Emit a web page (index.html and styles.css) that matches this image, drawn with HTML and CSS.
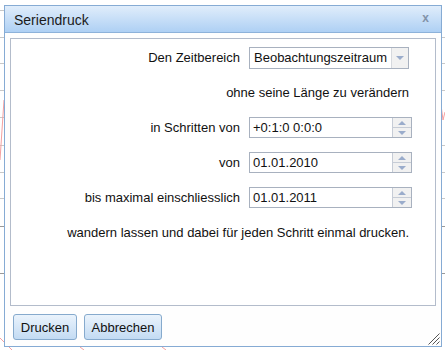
FILE: index.html
```html
<!DOCTYPE html>
<html lang="de">
<head>
<meta charset="utf-8">
<title>Seriendruck</title>
<link rel="stylesheet" href="styles.css">
</head>
<body>
<svg class="backdrop" width="445" height="350" viewBox="0 0 445 350">
  <g stroke="#c8c8c8" stroke-width="1">
    <line x1="0" y1="10.5" x2="4" y2="10.5"/>
    <line x1="0" y1="37.5" x2="4" y2="37.5"/>
    <line x1="0" y1="63.5" x2="4" y2="63.5"/>
    <line x1="0" y1="90.5" x2="4" y2="90.5"/>
    <line x1="0" y1="117.5" x2="4" y2="117.5"/>
    <line x1="0" y1="145.5" x2="4" y2="145.5"/>
    <line x1="0" y1="172.5" x2="4" y2="172.5"/>
    <line x1="0" y1="198.5" x2="4" y2="198.5"/>
    <line x1="441" y1="37.5" x2="445" y2="37.5"/>
    <line x1="441" y1="63.5" x2="445" y2="63.5"/>
    <line x1="441" y1="90.5" x2="445" y2="90.5"/>
    <line x1="441" y1="145.5" x2="445" y2="145.5"/>
    <line x1="441" y1="172.5" x2="445" y2="172.5"/>
    <line x1="441" y1="198.5" x2="445" y2="198.5"/>
  </g>
  <g stroke="#999" stroke-width="1">
    <line x1="0" y1="226.5" x2="4" y2="226.5"/>
    <line x1="0" y1="273.5" x2="4" y2="273.5"/>
    <line x1="441" y1="226.5" x2="445" y2="226.5"/>
    <line x1="441" y1="273.5" x2="445" y2="273.5"/>
  </g>
  <g stroke="#f4a0a0" stroke-width="1" fill="none">
    <polyline points="0,160 2,130 4,100"/>
    <polyline points="441,105 443,120 445,112"/>
    <polyline points="0,338 6,344 12,350"/>
    <polyline points="80,347 84,350"/>
    <polyline points="162,347 166,350"/>
  </g>
</svg>

<div class="dialog">
  <div class="titlebar">
    <span class="title">Seriendruck</span>
    <span class="close">x</span>
  </div>
  <div class="panel">
    <div class="form">
      <span class="label">Den Zeitbereich</span>
      <div class="select">
        <span class="select-text">Beobachtungszeitraum</span>
        <span class="select-btn"><span class="tri-down"></span></span>
      </div>

      <span class="note">ohne seine Länge zu verändern</span>

      <span class="label">in Schritten von</span>
      <div class="spin">
        <span class="spin-text">+0:1:0 0:0:0</span>
        <span class="spin-btns"><span class="half"><span class="tri-up"></span></span><span class="half"><span class="tri-down"></span></span></span>
      </div>

      <span class="label">von</span>
      <div class="spin">
        <span class="spin-text">01.01.2010</span>
        <span class="spin-btns"><span class="half"><span class="tri-up"></span></span><span class="half"><span class="tri-down"></span></span></span>
      </div>

      <span class="label">bis maximal einschliesslich</span>
      <div class="spin">
        <span class="spin-text">01.01.2011</span>
        <span class="spin-btns"><span class="half"><span class="tri-up"></span></span><span class="half"><span class="tri-down"></span></span></span>
      </div>

      <span class="note">wandern lassen und dabei für jeden Schritt einmal drucken.</span>
    </div>
  </div>
  <div class="buttons">
    <button class="btn btn-print">Drucken</button>
    <button class="btn btn-cancel">Abbrechen</button>
  </div>
  <svg class="grip" width="12" height="12" viewBox="0 0 12 12">
    <g stroke="#555" stroke-width="1">
      <line x1="11.5" y1="0.5" x2="0.5" y2="11.5"/>
      <line x1="11.5" y1="4.5" x2="4.5" y2="11.5"/>
      <line x1="11.5" y1="8.5" x2="8.5" y2="11.5"/>
    </g>
  </svg>
</div>
</body>
</html>
```

FILE: styles.css
```css
* { box-sizing: border-box; }

html, body {
  margin: 0;
  padding: 0;
  width: 445px;
  height: 350px;
  overflow: hidden;
  background: #ffffff;
  font-family: "Liberation Sans", Arial, sans-serif;
  color: #111;
}

.backdrop {
  position: absolute;
  left: 0;
  top: 0;
}

.dialog {
  position: absolute;
  left: 4px;
  top: 5px;
  width: 438px;
  height: 342px;
  border: 1px solid #86abd4;
  background: #fefefe;
  display: flex;
  flex-direction: column;
}

.titlebar {
  height: 27px;
  flex: none;
  border-bottom: 1px solid #8db2da;
  background: linear-gradient(#e0edfb, #aed0f4);
  display: flex;
  align-items: center;
  justify-content: space-between;
  padding: 0 12px 0 9px;
}

.title {
  font-size: 14px;
  color: #1b1b1b;
  margin-top: 1px;
}

.close {
  font-size: 12px;
  font-weight: bold;
  color: #8292a8;
  line-height: 1;
  margin-top: -2px;
}

.panel {
  margin: 5px 5px 0 5px;
  height: 268px;
  flex: none;
  border: 1px solid #b3bccb;
  background: #fff;
  padding: 1px 23px 0 0;
}

.form {
  display: grid;
  grid-template-columns: 1fr 163px;
  grid-auto-rows: 35px;
  column-gap: 9px;
  align-items: center;
  font-size: 13px;
}

.label {
  text-align: right;
  white-space: nowrap;
}

.note {
  grid-column: 1 / 3;
  text-align: right;
  padding-right: 3px;
  white-space: nowrap;
}

.select {
  width: 160px;
  height: 22px;
  border: 1px solid #a8b1bf;
  display: flex;
  background: #fff;
}

.select-text {
  flex: 1;
  padding-left: 4px;
  line-height: 20px;
}

.select-btn {
  width: 17px;
  border-left: 1px solid #d6d9de;
  background: #f1f1f1;
  display: flex;
  align-items: center;
  justify-content: center;
}

.spin {
  width: 163px;
  height: 21px;
  border: 1px solid #a8b1bf;
  display: flex;
  background: #fff;
}

.spin-text {
  flex: 1;
  padding-left: 3px;
  line-height: 19px;
}

.spin-btns {
  width: 19px;
  border-left: 1px solid #c6ccd6;
  display: flex;
  flex-direction: column;
}

.half {
  flex: 1;
  background: #f1f1f1;
  display: flex;
  align-items: center;
  justify-content: center;
}

.half + .half {
  border-top: 1px solid #c6ccd6;
}

.tri-down {
  width: 0;
  height: 0;
  border-left: 4px solid transparent;
  border-right: 4px solid transparent;
  border-top: 4px solid #9aaccb;
}

.tri-up {
  width: 0;
  height: 0;
  border-left: 4px solid transparent;
  border-right: 4px solid transparent;
  border-bottom: 4px solid #9aaccb;
}

.buttons {
  display: flex;
  gap: 7px;
  padding: 8px 0 0 8px;
}

.btn {
  height: 26px;
  padding: 0;
  border: 1px solid #86aacd;
  border-radius: 3px;
  background: linear-gradient(#eaf3fc, #c3dbf3);
  font-family: "Liberation Sans", Arial, sans-serif;
  font-size: 13px;
  color: #111;
}

.btn-print { width: 64px; }
.btn-cancel { width: 78px; }

.grip {
  position: absolute;
  right: 1px;
  bottom: 1px;
}
```
